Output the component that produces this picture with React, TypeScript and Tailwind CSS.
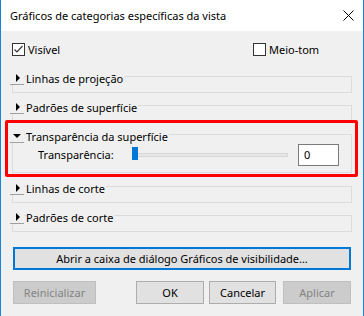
import React from "react";

// --- Sub-components ---

const FONT = "font-['Segoe_UI','Noto_Sans',sans-serif] text-[11px] leading-[14px] whitespace-nowrap";

const Checkbox = ({ checked, label }: { checked: boolean; label: string }) => (
  <div className="flex h-[13px] items-center">
    <div className="flex h-[13px] w-[13px] shrink-0 items-center justify-center border border-[#333333] bg-white">
      {checked && (
        <svg width="11" height="11" viewBox="0 0 11 11">
          <path d="M1.5 5.5 L4 8 L9.5 2" fill="none" stroke="#333333" strokeWidth="1.2" />
        </svg>
      )}
    </div>
    <span className="ml-[3px] leading-[13px]">{label}</span>
  </div>
);

interface GroupProps {
  title: string;
  open?: boolean;
  boxClass: string;
  children?: React.ReactNode;
}

const Group = ({ title, open, boxClass, children }: GroupProps) => (
  <div className="relative pt-[4px]">
    <div className={`border border-[#dcdcdc] ${boxClass}`}>{children}</div>
    {/* expander header lying over the top edge of the box */}
    <div className="absolute left-[-2px] top-0 flex h-[13px] items-center">
      <div className="flex h-[13px] w-[14px] items-center justify-center border-b border-[#a0a0a0] bg-[#f0f0f0]">
        {open ? (
          <div className="h-0 w-0 border-x-[4px] border-t-[4px] border-x-transparent border-t-black" />
        ) : (
          <div className="ml-[1px] h-0 w-0 border-y-[4px] border-l-[4px] border-y-transparent border-l-black" />
        )}
      </div>
      <span className="ml-[2px] bg-[#f0f0f0] pr-[1px] leading-[14px]">{title}</span>
    </div>
  </div>
);

const Button = ({ label, disabled, className }: { label: string; disabled?: boolean; className: string }) => (
  <div
    className={`flex h-[23px] items-center justify-center border ${
      disabled ? "border-[#bfbfbf] bg-[#cccccc] text-[#838383]" : "border-[#adadad] bg-[#e1e1e1] text-black"
    } ${className}`}
  >
    {label}
  </div>
);

// --- Main Component ---

export default function App() {
  return (
    <div className={`flex h-[316px] w-[364px] flex-col overflow-hidden border-x border-[#1883d7] bg-[#f0f0f0] text-black ${FONT}`}>
      {/* Title bar */}
      <div className="flex h-[31px] shrink-0 items-center justify-between bg-white pl-[9px] pr-[9px]">
        <span>Gráficos de categorias específicas da vista</span>
        <svg width="11" height="11" viewBox="0 0 11 11">
          <path d="M0.5 0.5 L10.5 10.5 M10.5 0.5 L0.5 10.5" stroke="#000" strokeWidth="1" />
        </svg>
      </div>

      <div className="flex flex-col px-[11px]">
        <div className="mt-[12px] flex">
          <div className="w-[241px]">
            <Checkbox checked label="Visível" />
          </div>
          <Checkbox checked={false} label="Meio-tom" />
        </div>

        <div className="mt-[16px]">
          <Group title="Linhas de projeção" boxClass="h-[17px]" />
        </div>
        <div className="mt-[8px]">
          <Group title="Padrões de superfície" boxClass="h-[17px]" />
        </div>

        <div className="relative mt-[8px]">
          <Group title="Transparência da superfície" open boxClass="h-[39px]">
            <div className="flex items-center pl-[25px] pr-[12px] pt-[9px]">
              <span className="w-[94px]">Transparência:</span>
              <div className="relative flex h-[22px] w-[156px] items-center">
                <div className="h-[4px] w-full border border-[#d6d6d6] bg-[#e7e7e7]" />
                <div className="absolute left-0 top-[3px] h-[13px] w-[6px] bg-[#0078d7]" />
              </div>
              <div className="ml-auto flex h-[22px] w-[41px] items-center border border-[#7a7a7a] bg-white pl-[5px]">
                0
              </div>
            </div>
          </Group>
          {/* red highlight annotation */}
          <div className="pointer-events-none absolute -left-[7px] -right-[6px] -top-[10px] -bottom-[4px] rounded-[2px] border-[3px] border-[#ff0000]" />
        </div>

        <div className="mt-[9px]">
          <Group title="Linhas de corte" boxClass="h-[17px]" />
        </div>
        <div className="mt-[8px]">
          <Group title="Padrões de corte" boxClass="h-[17px]" />
        </div>

        <div className="mx-[1px] mt-[15px] flex h-[23px] items-center justify-center border-2 border-[#0078d7] bg-[#e1e1e1]">
          Abrir a caixa de diálogo Gráficos de visibilidade…
        </div>

        <div className="mx-[1px] mt-[11px] flex">
          <Button label="Reinicializar" disabled className="w-[83px]" />
          <Button label="OK" className="ml-[40px] w-[68px]" />
          <Button label="Cancelar" className="ml-[5px] w-[67px]" />
          <Button label="Aplicar" disabled className="ml-[7px] w-[68px]" />
        </div>
      </div>
    </div>
  );
}
